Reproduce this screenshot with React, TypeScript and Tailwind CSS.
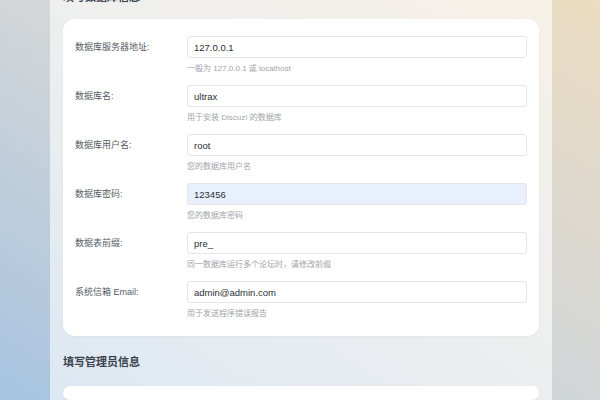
const rows = [
  { label: '数据库服务器地址:', value: '127.0.0.1', help: '一般为 127.0.0.1 或 localhost' },
  { label: '数据库名:', value: 'ultrax', help: '用于安装 Discuz! 的数据库' },
  { label: '数据库用户名:', value: 'root', help: '您的数据库用户名' },
  { label: '数据库密码:', value: '123456', help: '您的数据库密码', filled: true },
  { label: '数据表前缀:', value: 'pre_', help: '同一数据库运行多个论坛时，请修改前缀' },
  { label: '系统信箱 Email:', value: 'admin@admin.com', help: '用于发送程序错误报告' },
]

function Field({ label, value, help, filled }: { label: string; value: string; help: string; filled?: boolean }) {
  return (
    <div className="flex flex-col">
      <div className="flex items-center">
        <label className="w-[112px] shrink-0 text-[9px] leading-[22px] text-[#555b63]">{label}</label>
        <input
          readOnly
          value={value}
          className={`h-[22px] flex-1 rounded-[3px] border border-[#e3e5e8] px-[6px] text-[9.5px] text-[#2a2f36] outline-none ${
            filled ? 'bg-[#e8f0fd]' : 'bg-white'
          }`}
        />
      </div>
      <div className="mt-[5px] h-3 pl-[112px] text-[8px] leading-3 text-[#a0a4aa]">{help}</div>
    </div>
  )
}

export default function App() {
  return (
    <div
      className="flex h-[400px] w-[600px] overflow-hidden bg-gradient-to-bl from-[#ecdcc0] via-[#d2d6d8] to-[#a6c3e0] pl-[50px]"
      style={{ fontFamily: '"Liberation Sans", "Noto Sans CJK SC", sans-serif' }}
    >
      <div className="flex w-[502px] flex-col bg-white/60 px-[13px]">
        <h2 className="-mt-[13px] mb-3 h-5 text-[11px] font-bold leading-5 text-[#3a424d]">填写数据库信息</h2>
        <div className="flex flex-col gap-[10px] rounded-xl bg-white px-3 pb-4 pt-[17px] shadow-[0_1px_3px_rgba(0,0,0,0.04)]">
          {rows.map((r) => (
            <Field key={r.label} {...r} />
          ))}
        </div>
        <h2 className="mb-3.5 mt-4 h-5 text-[11px] font-bold leading-5 text-[#3a424d]">填写管理员信息</h2>
        <div className="h-40 rounded-xl bg-white shadow-[0_1px_3px_rgba(0,0,0,0.04)]" />
      </div>
    </div>
  )
}
